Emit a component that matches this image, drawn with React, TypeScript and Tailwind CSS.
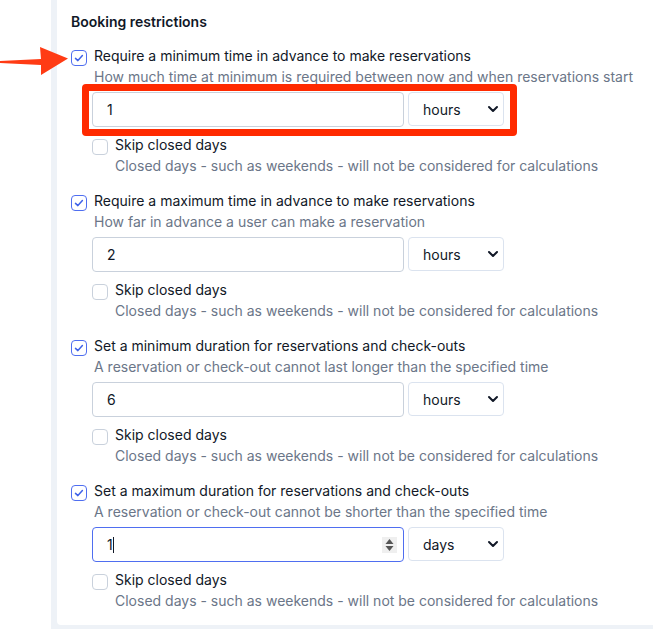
const sections = [
  { title: "Require a minimum time in advance to make reservations", help: "How much time at minimum is required between now and when reservations start", value: "1", unit: "hours" },
  { title: "Require a maximum time in advance to make reservations", help: "How far in advance a user can make a reservation", value: "2", unit: "hours" },
  { title: "Set a minimum duration for reservations and check-outs", help: "A reservation or check-out cannot last longer than the specified time", value: "6", unit: "hours" },
  { title: "Set a maximum duration for reservations and check-outs", help: "A reservation or check-out cannot be shorter than the specified time", value: "1", unit: "days", focused: true },
];

function CheckedBox() {
  return (
    <span className="mt-[4px] flex h-[16px] w-[16px] shrink-0 items-center justify-center rounded-[4px] border border-[#4f6ef0] bg-white">
      <svg width="10" height="10" viewBox="0 0 10 10" fill="none">
        <path d="M1.5 5.4 L3.9 7.6 L8.4 2.6" stroke="#3f62e8" strokeWidth="1.5" strokeLinecap="round" strokeLinejoin="round" />
      </svg>
    </span>
  );
}

function Section({ s }: { s: (typeof sections)[number] }) {
  return (
    <div className="h-[145px]">
      <div className="flex h-[21px] items-center gap-[7px]">
        <CheckedBox />
        <span className="text-[14px] text-[#111827]">{s.title}</span>
      </div>
      <div className="ml-[23px] h-[21px] text-[14px] leading-[21px] text-[#6b7688]">{s.help}</div>
      <div className="ml-[21px] mt-[5px]">
        <div className="flex h-[35px] gap-[4px]">
          <div className={`flex h-[35px] w-[312px] items-center justify-between rounded-[4px] border bg-white pl-[14px] pr-[6px] text-[14px] text-[#111827] ${s.focused ? "border-[#4f6ef0]" : "border-[#c9d1dc]"}`}>
            <span className="flex items-center">
              {s.value}
              {s.focused && <span className="h-[16px] w-px bg-[#111827]" />}
            </span>
            {s.focused && (
              <span className="flex h-[16px] w-[15px] flex-col items-center justify-center gap-[2px] bg-[#efefef]">
                <svg width="9" height="5" viewBox="0 0 9 5"><path d="M4.5 0 L8.5 5 L0.5 5 Z" fill="#555" /></svg>
                <svg width="9" height="5" viewBox="0 0 9 5"><path d="M0.5 0 L8.5 0 L4.5 5 Z" fill="#555" /></svg>
              </span>
            )}
          </div>
          <div className="flex h-[34px] w-[96px] items-center justify-between rounded-[4px] border border-[#dbe3ef] bg-white pl-[14px] pr-[4px] text-[14px] text-[#111827]">
            <span>{s.unit}</span>
            <svg width="12" height="12" viewBox="0 0 12 12" fill="none">
              <path d="M2 4 L6 8 L10 4" stroke="#111827" strokeWidth="2" strokeLinecap="round" strokeLinejoin="round" />
            </svg>
          </div>
        </div>
        <div className="mt-[8px] flex h-[19px] items-center gap-[7px]">
          <span className="mt-[4px] h-[16px] w-[16px] shrink-0 rounded-[4px] border border-[#c9d1dc] bg-white" />
          <span className="text-[14px] text-[#111827]">Skip closed days</span>
        </div>
        <div className="ml-[23px] mt-[1px] h-[21px] text-[14px] leading-[21px] text-[#6b7688]">
          Closed days - such as weekends - will not be considered for calculations
        </div>
      </div>
    </div>
  );
}

export default function App() {
  return (
    <div className="relative h-[629px] w-[653px] overflow-hidden bg-white pl-[51px] font-['Inter',sans-serif]">
      <div className="h-full bg-[#eef2f7] pb-[4px] pl-[6px]">
        <div className="h-full whitespace-nowrap rounded-bl-[4px] bg-white pl-[14px] pt-[13px]">
          <h2 className="h-[32px] text-[14px] font-semibold leading-[17px] text-[#111827]">Booking restrictions</h2>
          {sections.map((s) => (
            <Section key={s.title} s={s} />
          ))}
        </div>
      </div>
      <div className="absolute left-[82px] top-[84px] h-[52px] w-[435px] rounded-[4px] border-[7px] border-[#ff2a00]" />
      <svg className="absolute left-0 top-[44px]" width="70" height="34" viewBox="0 0 70 34">
        <path d="M0 17 L41 15 L40 3 L68 14.5 L41 31 L41 21 L0 19 Z" fill="#ff3b14" />
      </svg>
    </div>
  );
}
